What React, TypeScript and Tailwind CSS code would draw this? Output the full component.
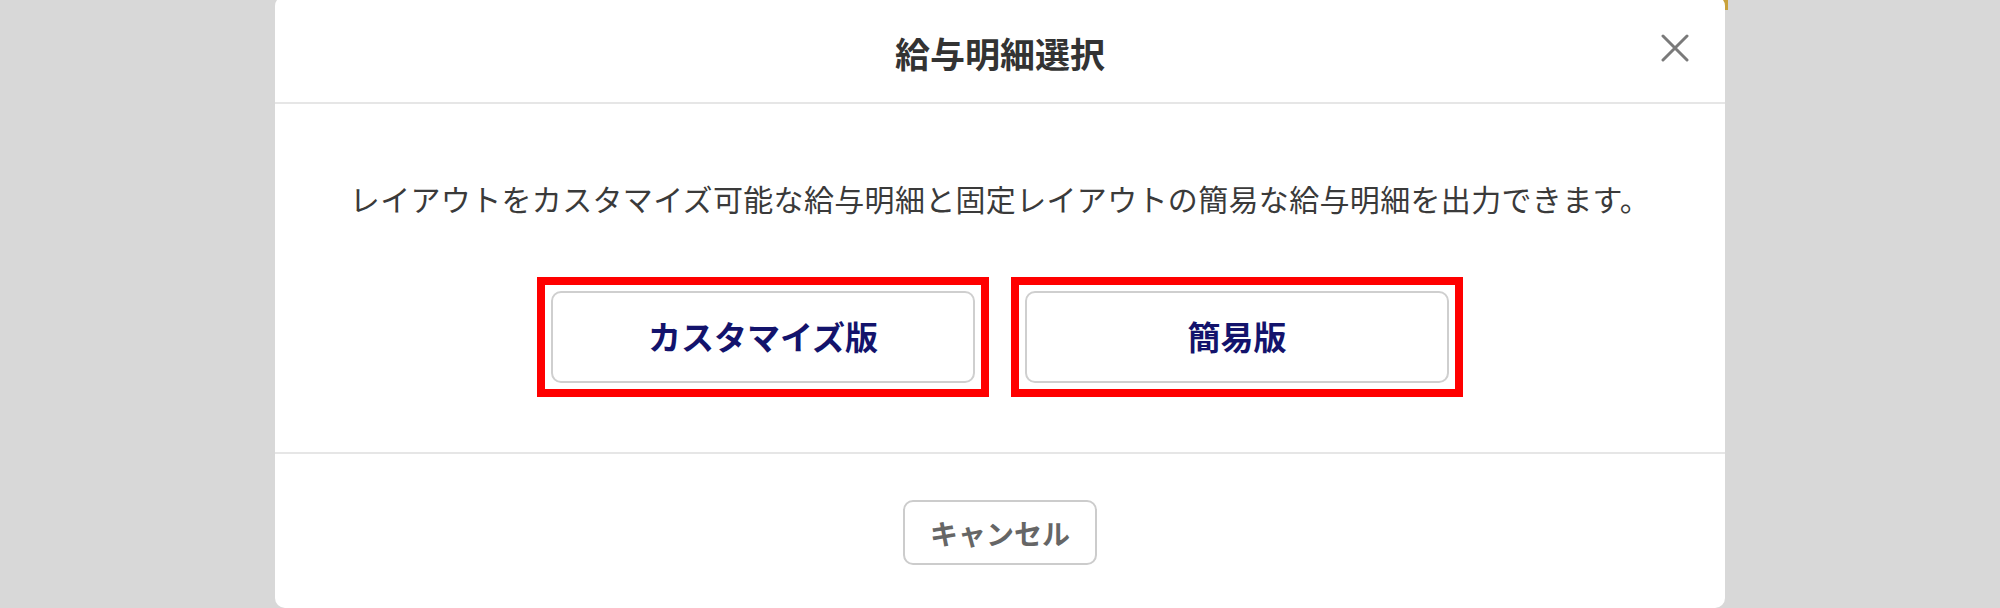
import React from "react";

const jp = { fontFamily: '"Noto Sans CJK JP", "Noto Sans", sans-serif' };

function ChoiceButton({ label }: { label: string }) {
  return (
    <div className="border-[8px] border-[#ff0000] p-[6px]">
      <button
        className="w-[424px] h-[92px] bg-white border-2 border-[#cfcfcf] rounded-[10px] text-[33px] font-bold text-[#13136c] flex items-center justify-center"
        style={jp}
      >
        {label}
      </button>
    </div>
  );
}

export default function App() {
  return (
    <div className="relative w-[2000px] h-[608px] bg-[#d8d8d8] overflow-hidden flex justify-center" style={jp}>
      <div className="absolute left-[1712px] top-0 w-[16px] h-[10px] bg-[#c9a23c]" />
      <div className="relative w-[1450px] h-[612px] -mt-[4px] bg-white rounded-[10px] flex flex-col">
        <div className="relative h-[108px] pt-[6px] border-b-2 border-[#e6e6e6] flex items-center justify-center">
          <h1 className="text-[35px] font-bold text-[#333333] leading-none">給与明細選択</h1>
          <button className="absolute right-[36px] top-[38px] w-[28px] h-[28px] flex items-center justify-center">
            <svg width="28" height="28" viewBox="0 0 28 28" fill="none">
              <path d="M2 2 L26 26 M26 2 L2 26" stroke="#7a7a7a" strokeWidth="3" strokeLinecap="round" />
            </svg>
          </button>
        </div>
        <div className="flex flex-col items-center pt-[76px] pb-[55px] border-b-2 border-[#e6e6e6]">
          <p className="text-[30px] leading-[36px] tracking-[0.33px] text-[#3a3a3a]">
            レイアウトをカスタマイズ可能な給与明細と固定レイアウトの簡易な給与明細を出力できます。
          </p>
          <div className="mt-[61px] flex gap-[22px]">
            <ChoiceButton label="カスタマイズ版" />
            <ChoiceButton label="簡易版" />
          </div>
        </div>
        <div className="flex justify-center pt-[46px]">
          <button
            className="w-[194px] h-[65px] bg-white border-2 border-[#cccccc] rounded-[10px] text-[28px] font-bold text-[#666666] flex items-center justify-center"
            style={jp}
          >
            キャンセル
          </button>
        </div>
      </div>
    </div>
  );
}
